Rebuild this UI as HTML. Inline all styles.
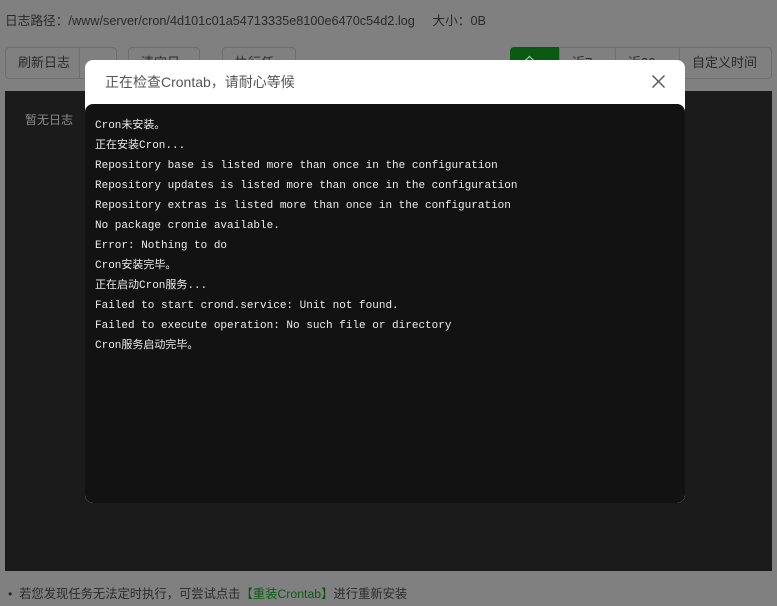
<!DOCTYPE html>
<html><head><meta charset="utf-8"><style>
*{margin:0;padding:0;box-sizing:border-box}
body{width:777px;height:606px;background:#808080;position:relative;overflow:hidden;font-family:"Liberation Sans","Noto Sans CJK SC",sans-serif;font-size:12px;color:#333}
.path{position:absolute;left:5px;top:10px;color:#2a2a2a;font-size:12.7px}
.btn{position:absolute;top:47px;height:32px;border:1px solid #6e6e6e;border-radius:4px;color:#2a2a2a;line-height:30px;padding:0 12px;background:#808080;font-size:13px}
.log{position:absolute;left:5px;top:91px;width:767px;height:480px;background:#1b1b1b}
.log span{position:absolute;left:20px;top:20px;color:#8a8a8a;font-size:12px}
.tip{position:absolute;left:8px;top:584px;color:#2a2a2a;font-size:12.3px}
.tip b{font-weight:normal;color:#0b5a14}
.dlg{position:absolute;left:85px;top:60px;width:600px;height:443px;background:#fff;border-radius:8px;overflow:hidden}
.hd{height:44px;line-height:44px;padding-left:20px;font-size:14px;color:#555}
.x{position:absolute;right:20px;top:15px;width:13px;height:13px}
.bd{position:absolute;left:0;top:44px;width:600px;height:399px;background:#121212;border-radius:8px;padding:12px 10px;font-family:"Liberation Mono","Noto Sans CJK SC",monospace;font-size:11px;color:#ececec;line-height:20px;white-space:pre}
</style></head><body>
<div class="path">日志路径：/www/server/cron/4d101c01a54713335e8100e6470c54d2.log &nbsp;&nbsp;&nbsp;&nbsp;大小：0B</div>
<div class="btn" style="left:5px;width:112px">刷新日志</div>
<div class="btn" style="left:79px;width:1px;padding:0;border-width:0 0 0 1px;top:48px;height:30px;border-radius:0"></div>
<div class="btn" style="left:128px;width:72px">清空日志</div>
<div class="btn" style="left:222px;width:74px">执行任务</div>
<div class="btn" style="left:510px;width:50px;background:#0b5a14;border-color:#0b5a14;color:#ccc;border-radius:4px 0 0 4px">全部</div>
<div class="btn" style="left:559px;width:57px;border-radius:0">近7天</div>
<div class="btn" style="left:615px;width:65px;border-radius:0">近30天</div>
<div class="btn" style="left:679px;width:93px;border-radius:0 4px 4px 0;padding:0 12px">自定义时间</div>
<div class="log"><span>暂无日志</span></div>
<div class="tip">•&nbsp;&nbsp;若您发现任务无法定时执行，可尝试点击<b>【重装Crontab】</b>进行重新安装</div>
<div class="dlg">
<div class="hd">正在检查Crontab，请耐心等候</div>
<svg class="x" viewBox="0 0 13 13"><path d="M0.5 0.5L12.5 12.5M12.5 0.5L0.5 12.5" stroke="#555" stroke-width="1.4"/></svg>
<div class="bd">Cron未安装。
正在安装Cron...
Repository base is listed more than once in the configuration
Repository updates is listed more than once in the configuration
Repository extras is listed more than once in the configuration
No package cronie available.
Error: Nothing to do
Cron安装完毕。
正在启动Cron服务...
Failed to start crond.service: Unit not found.
Failed to execute operation: No such file or directory
Cron服务启动完毕。</div>
</div>
</body></html>
